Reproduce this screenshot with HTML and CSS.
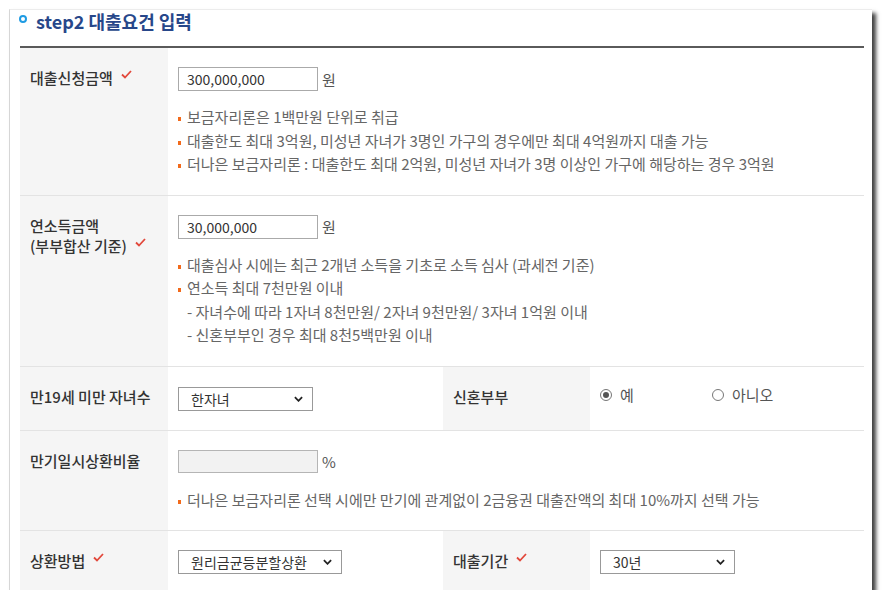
FILE: index.html
```html
<!DOCTYPE html>
<html>
<head>
    <meta charset="UTF-8">
    <title>step2 대출요건 입력</title>
    <link rel="stylesheet" href="styles.css">
</head>
<body>
    <div class="window">
        <h2 class="step-title"><span class="dot"></span>step2 대출요건 입력</h2>

        <div class="form-table">
            <!-- 대출신청금액 -->
            <div class="row">
                <div class="th">대출신청금액<svg class="req" viewBox="0 0 11 9"><polyline points="1,4.5 4,7.5 10,1"/></svg></div>
                <div class="td">
                    <div class="field">
                        <input class="text-input" type="text" value="300,000,000">
                        <span class="unit">원</span>
                    </div>
                    <ul class="notes">
                        <li>보금자리론은 1백만원 단위로 취급</li>
                        <li>대출한도 최대 3억원, 미성년 자녀가 3명인 가구의 경우에만 최대 4억원까지 대출 가능</li>
                        <li>더나은 보금자리론 : 대출한도 최대 2억원, 미성년 자녀가 3명 이상인 가구에 해당하는 경우 3억원</li>
                    </ul>
                </div>
            </div>

            <!-- 연소득금액 -->
            <div class="row">
                <div class="th">연소득금액<br>(부부합산 기준)<svg class="req" viewBox="0 0 11 9"><polyline points="1,4.5 4,7.5 10,1"/></svg></div>
                <div class="td">
                    <div class="field">
                        <input class="text-input" type="text" value="30,000,000">
                        <span class="unit">원</span>
                    </div>
                    <ul class="notes">
                        <li>대출심사 시에는 최근 2개년 소득을 기초로 소득 심사 (과세전 기준)</li>
                        <li>연소득 최대 7천만원 이내</li>
                        <li class="sub">- 자녀수에 따라 1자녀 8천만원/ 2자녀 9천만원/ 3자녀 1억원 이내</li>
                        <li class="sub">- 신혼부부인 경우 최대 8천5백만원 이내</li>
                    </ul>
                </div>
            </div>

            <!-- 자녀수 / 신혼부부 -->
            <div class="row split">
                <div class="th">만19세 미만 자녀수</div>
                <div class="td">
                    <div class="select-box w135">
                        <select><option>한자녀</option></select>
                        <svg class="chev" viewBox="0 0 10 6"><polyline points="1,1 5,5 9,1"/></svg>
                    </div>
                </div>
                <div class="th">신혼부부</div>
                <div class="td radios">
                    <label class="radio"><input type="radio" name="newly" checked>예</label>
                    <label class="radio"><input type="radio" name="newly">아니오</label>
                </div>
            </div>

            <!-- 만기일시상환비율 -->
            <div class="row">
                <div class="th">만기일시상환비율</div>
                <div class="td">
                    <div class="field">
                        <input class="text-input disabled" type="text" disabled>
                        <span class="unit">%</span>
                    </div>
                    <ul class="notes">
                        <li>더나은 보금자리론 선택 시에만 만기에 관계없이 2금융권 대출잔액의 최대 10%까지 선택 가능</li>
                    </ul>
                </div>
            </div>

            <!-- 상환방법 / 대출기간 -->
            <div class="row split last">
                <div class="th">상환방법<svg class="req" viewBox="0 0 11 9"><polyline points="1,4.5 4,7.5 10,1"/></svg></div>
                <div class="td">
                    <div class="select-box w164">
                        <select><option>원리금균등분할상환</option></select>
                        <svg class="chev" viewBox="0 0 10 6"><polyline points="1,1 5,5 9,1"/></svg>
                    </div>
                </div>
                <div class="th">대출기간<svg class="req" viewBox="0 0 11 9"><polyline points="1,4.5 4,7.5 10,1"/></svg></div>
                <div class="td">
                    <div class="select-box w135">
                        <select><option>30년</option></select>
                        <svg class="chev" viewBox="0 0 10 6"><polyline points="1,1 5,5 9,1"/></svg>
                    </div>
                </div>
            </div>
        </div>
    </div>
</body>
</html>
```

FILE: styles.css
```css
body {
    font-family: "Noto Sans CJK KR", "Noto Sans", sans-serif;
    margin: 0;
    background-color: #fff;
    color: #333;
}
.window {
    margin: 9px 0 0 9px;
    width: 844px;
    height: 580px;
    padding: 0 8px 0 10px;
    background-color: #fff;
    border-left: 1px solid #d6d6d6;
    border-top: 1px solid #ececec;
    box-shadow: 4px 4px 4px rgba(0,0,0,0.75);
    overflow: hidden;
}
.step-title {
    display: flex;
    align-items: flex-start;
    margin: 0;
    height: 35px;
    padding-bottom: 1px;
    line-height: 22px;
    font-size: 18px;
    font-weight: bold;
    color: #27478a;
    border-bottom: 2px solid #5a5a5a;
}
.dot {
    box-sizing: border-box;
    width: 8px;
    height: 8px;
    margin: 5px 9px 0 -1px;
    border: 2px solid #1e9be3;
    border-radius: 50%;
}
.row {
    display: grid;
    grid-template-columns: 148px 1fr;
    border-bottom: 1px solid #e3e3e3;
}
.row.split {
    grid-template-columns: 148px 275px 147px 1fr;
}
.row.split .td {
    padding-bottom: 20px;
}
.row.last {
    border-bottom: none;
}
.th {
    background-color: #f5f5f5;
    padding: 20px 10px 0 10px;
    line-height: 20px;
    font-family: "Noto Sans CJK KR Medium", "Noto Sans CJK KR", sans-serif;
    font-size: 15px;
    font-weight: 500;
    color: #333;
}
.row.last .th {
    padding-top: 20px;
}
.req {
    width: 11px;
    height: 9px;
    margin-left: 8px;
    vertical-align: top;
    margin-top: 2px;
    fill: none;
    stroke: #e2483b;
    stroke-width: 1.8;
}
.td {
    padding: 19px 10px 19px 10px;
}
.row.last .td {
    padding-top: 18px;
}
.field {
    display: flex;
    align-items: center;
    height: 24px;
}
.text-input {
    box-sizing: border-box;
    width: 140px;
    height: 24px;
    padding: 0 8px;
    border: 1px solid #aaa;
    font-family: inherit;
    font-size: 14px;
    color: #333;
    background-color: #fff;
}
.text-input.disabled {
    height: 23px;
    background-color: #f2f2f2;
    border-color: #b5b5b5;
}
.unit {
    margin-left: 4px;
    font-size: 15px;
    color: #555;
}
.notes {
    list-style: none;
    margin: 14px 0 0 0;
    padding: 0;
    font-size: 15px;
    line-height: 23.5px;
    color: #666;
}
.notes li {
    position: relative;
    padding-left: 9px;
}
.notes li::before {
    content: "";
    position: absolute;
    left: 0;
    top: 12px;
    width: 3px;
    height: 4px;
    background-color: #f26a1b;
}
.notes li.sub::before {
    display: none;
}
.select-box {
    position: relative;
    height: 24px;
}
.select-box.w135 { width: 135px; }
.select-box.w164 { width: 164px; }
.select-box select {
    box-sizing: border-box;
    width: 100%;
    height: 24px;
    padding: 0 0 0 12px;
    appearance: none;
    -webkit-appearance: none;
    border: 1px solid #999;
    border-radius: 0;
    background-color: #fff;
    font-family: inherit;
    font-size: 14px;
    color: #333;
}
.chev {
    position: absolute;
    right: 10px;
    top: 10px;
    width: 9px;
    height: 6px;
    fill: none;
    stroke: #222;
    stroke-width: 2;
    pointer-events: none;
}
.radios {
    display: flex;
    align-items: center;
    padding-top: 16px;
    height: 24px;
}
.radio {
    display: flex;
    align-items: center;
    width: 112px;
    font-size: 15px;
    color: #555;
    cursor: pointer;
}
.radio input {
    appearance: none;
    -webkit-appearance: none;
    box-sizing: border-box;
    width: 12px;
    height: 12px;
    margin: 0 8px 0 0;
    border: 1px solid #777;
    border-radius: 50%;
    background-color: #fff;
    position: relative;
}
.radio input:checked::after {
    content: "";
    position: absolute;
    left: 2px;
    top: 2px;
    width: 6px;
    height: 6px;
    border-radius: 50%;
    background-color: #555;
}
```
